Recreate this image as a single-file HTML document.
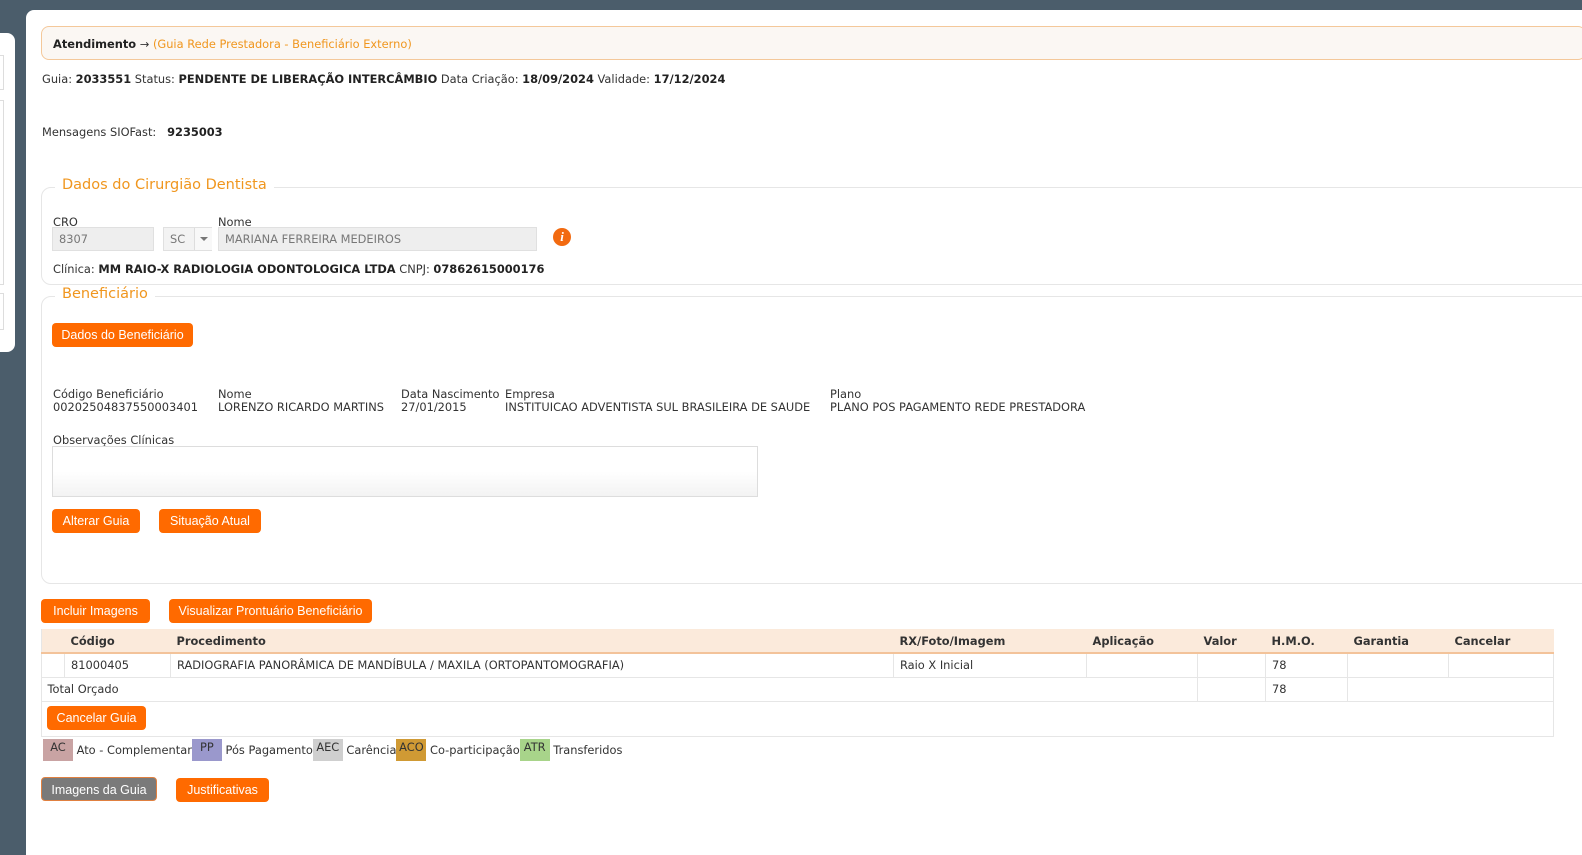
<!DOCTYPE html>
<html><head><meta charset="utf-8"><style>
*{margin:0;padding:0;box-sizing:border-box}
body{width:1582px;height:855px;background:#4b5d6b;position:relative;overflow:hidden;font-family:"DejaVu Sans",Verdana,sans-serif;font-size:11.4px;color:#333}
.a{position:absolute;white-space:nowrap}
b{font-weight:bold;color:#222}
.btn{position:absolute;background:#ff6a00;color:#fff;border-radius:4px;font-family:"Liberation Sans",Arial,sans-serif;font-size:12.5px;text-align:center;line-height:24px;height:24px}
.fs{position:absolute;border:1px solid #e6e6e6;border-radius:10px}
.lg{position:absolute;background:#fff;color:#f0961e;font-size:14.5px;padding:0 7px;font-family:"DejaVu Sans",Verdana,sans-serif}
.inp{position:absolute;background:#eee;border:1px solid #e0e0e0;color:#777;padding-left:6px;line-height:22px;height:24px}
table{border-collapse:collapse;position:absolute}
td{border:1px solid #e6e6e6;height:24px;padding-left:6px}
.lgd span.k{display:inline-block;width:30px;height:22px;text-align:center;vertical-align:top;line-height:17px}
.lgd{line-height:22px}
</style></head><body>
<div class="a" style="left:0;top:33px;width:15px;height:319px;background:#fff;border-radius:0 8px 8px 0"></div>
<div class="a" style="left:0;top:55px;width:4px;height:35px;border:1px solid #ddd;border-left:none"></div>
<div class="a" style="left:0;top:100px;width:4px;height:185px;border:1px solid #ddd;border-left:none"></div>
<div class="a" style="left:0;top:293px;width:4px;height:37px;border:1px solid #ddd;border-left:none"></div>
<div class="a" style="left:26px;top:10px;width:1556px;height:845px;background:#fff;border-radius:8px 0 0 0"></div>

<div class="a" style="left:41px;top:26px;width:1545px;height:34px;background:#fbf7f3;border:1px solid #f4c89a;border-radius:8px"></div>
<div class="a" style="left:53px;top:37px"><b>Atendimento</b> → <span style="color:#f0961e">(Guia Rede Prestadora - Beneficiário Externo)</span></div>
<div class="a" style="left:42px;top:72px">Guia: <b>2033551</b> Status: <b>PENDENTE DE LIBERAÇÃO INTERCÂMBIO</b> Data Criação: <b>18/09/2024</b> Validade: <b>17/12/2024</b></div>
<div class="a" style="left:42px;top:125px">Mensagens SIOFast: &nbsp; <b>9235003</b></div>

<div class="fs" style="left:41px;top:187px;width:1560px;height:98px"></div>
<div class="lg" style="left:55px;top:177px">Dados do Cirurgião Dentista</div>
<div class="a" style="left:53px;top:215px">CRO</div>
<div class="a" style="left:218px;top:215px">Nome</div>
<div class="inp" style="left:52px;top:227px;width:102px">8307</div>
<div class="inp" style="left:163px;top:227px;width:49px;background:#f3f3f3">SC</div>
<div class="a" style="left:194px;top:228px;width:18px;height:22px;border-left:1px solid #ddd;background:#f8f8f8"><div style="margin:9px 0 0 5px;width:0;height:0;border:4px solid transparent;border-top:4px solid #777"></div></div>
<div class="inp" style="left:218px;top:227px;width:319px">MARIANA FERREIRA MEDEIROS</div>
<div class="a" style="left:553px;top:228px;width:18px;height:18px;border-radius:50%;background:#f26a10;color:#fff;font:italic bold 13px 'Liberation Serif',serif;text-align:center;line-height:18px">i</div>
<div class="a" style="left:53px;top:262px">Clínica: <b>MM RAIO-X RADIOLOGIA ODONTOLOGICA LTDA</b> CNPJ: <b>07862615000176</b></div>

<div class="fs" style="left:41px;top:296px;width:1560px;height:288px"></div>
<div class="lg" style="left:55px;top:286px">Beneficiário</div>
<div class="btn" style="left:52px;top:323px;width:141px">Dados do Beneficiário</div>
<div class="a" style="left:53px;top:388px;line-height:13px">Código Beneficiário<br>00202504837550003401</div>
<div class="a" style="left:218px;top:388px;line-height:13px">Nome<br>LORENZO RICARDO MARTINS</div>
<div class="a" style="left:401px;top:388px;line-height:13px">Data Nascimento<br>27/01/2015</div>
<div class="a" style="left:505px;top:388px;line-height:13px">Empresa<br>INSTITUICAO ADVENTISTA SUL BRASILEIRA DE SAUDE</div>
<div class="a" style="left:830px;top:388px;line-height:13px">Plano<br>PLANO POS PAGAMENTO REDE PRESTADORA</div>
<div class="a" style="left:53px;top:433px">Observações Clínicas</div>
<div class="a" style="left:52px;top:446px;width:706px;height:51px;border:1px solid #ddd;background:linear-gradient(#fff 50%,#f3f3f3)"></div>
<div class="btn" style="left:52px;top:509px;width:88px">Alterar Guia</div>
<div class="btn" style="left:159px;top:509px;width:102px">Situação Atual</div>

<div class="btn" style="left:41px;top:599px;width:109px">Incluir Imagens</div>
<div class="btn" style="left:169px;top:599px;width:203px">Visualizar Prontuário Beneficiário</div>

<div class="a" style="left:41px;top:629px;width:1513px;height:108px;border:1px solid #e6e6e6"></div>
<table style="left:41px;top:629px;width:1513px">
<tr style="background:#fbeadb;border-bottom:2px solid #f3c39a;font-weight:bold;color:#333"><td style="border:none;width:23px;padding:0"></td><td style="border:none;width:106px">Código</td><td style="border:none;width:723px">Procedimento</td><td style="border:none;width:193px">RX/Foto/Imagem</td><td style="border:none;width:111px">Aplicação</td><td style="border:none;width:68px">Valor</td><td style="border:none;width:82px">H.M.O.</td><td style="border:none;width:101px">Garantia</td><td style="border:none">Cancelar</td></tr>
<tr><td style="padding:0"></td><td>81000405</td><td>RADIOGRAFIA PANORÂMICA DE MANDÍBULA / MAXILA (ORTOPANTOMOGRAFIA)</td><td>Raio X Inicial</td><td></td><td></td><td>78</td><td></td><td></td></tr>
<tr><td colspan="5" style="border-left:none">Total Orçado</td><td></td><td>78</td><td colspan="2" style="border-right:none"></td></tr>
</table>
<div class="btn" style="left:47px;top:706px;width:99px">Cancelar Guia</div>

<div class="a lgd" style="left:43px;top:739px;height:22px"><span class="k" style="background:#c9a3a3">AC</span> Ato - Complementar<span class="k" style="background:#9a98cc">PP</span> Pós Pagamento<span class="k" style="background:#cfcfcf">AEC</span> Carência<span class="k" style="background:#d09a34">ACO</span> Co-participação<span class="k" style="background:#a8d48a">ATR</span> Transferidos</div>

<div class="btn" style="left:41px;top:777px;width:116px;background:#7a7a7a;border:1px solid #e08040">Imagens da Guia</div>
<div class="btn" style="left:176px;top:778px;width:93px">Justificativas</div>
</body></html>
